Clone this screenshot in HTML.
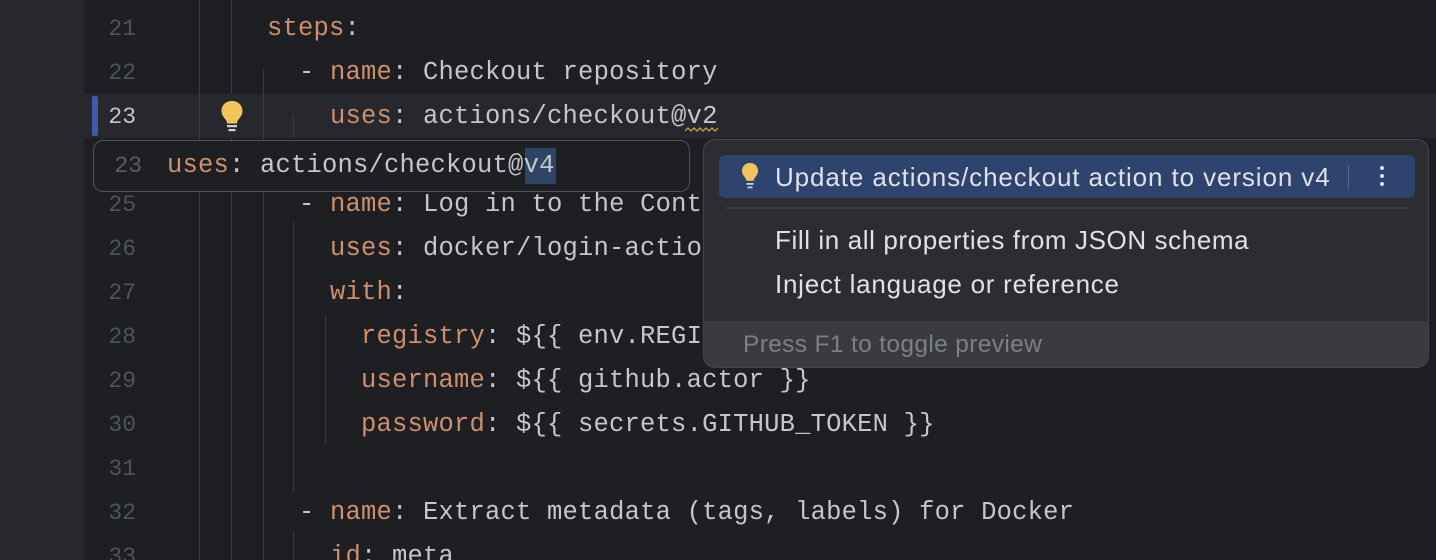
<!DOCTYPE html>
<html><head><meta charset="utf-8"><style>
*{margin:0;padding:0;box-sizing:border-box}
html,body{width:1436px;height:560px;overflow:hidden}
body{background:#1e1f22;position:relative;font-family:"Liberation Mono",monospace}
.left{position:absolute;left:0;top:0;width:84px;height:560px;background:#26282c}
.cur{position:absolute;left:84px;top:94px;width:1352px;height:44px;background:#26282e}
.mark{position:absolute;left:92px;top:96px;width:6px;height:40px;background:#3d5ba8;border-radius:2px}
.ln{position:absolute;left:100px;width:36px;text-align:right;color:#4e535c;font-size:23px;line-height:44px;height:44px}
.code{position:absolute;font-size:25.5px;line-height:44px;height:44px;color:#c4c6cc;white-space:pre;letter-spacing:0.2px}
.k{color:#cf8e6d}
.g{position:absolute;width:1px;background:#393b40}
.p1{position:absolute;left:93px;top:140px;width:597px;height:52px;background:#1e1f22;border:1px solid #4e5157;border-radius:10px}
.p2{position:absolute;left:703px;top:139px;width:726px;height:229px;background:#2b2d30;border:1px solid #43454a;border-radius:12px;overflow:hidden;font-family:"Liberation Sans",sans-serif}
.sel{position:absolute;left:15px;top:15px;width:696px;height:43px;background:#2e436e;border-radius:6px}
.it{position:absolute;left:71px;font-size:26px;letter-spacing:0.9px;color:#dfe1e5;line-height:30px;white-space:nowrap}
.foot{position:absolute;left:0;top:181px;width:726px;height:48px;background:#393b40}
</style></head><body>
<div class="left"></div>
<div class="cur"></div>
<div class="mark"></div>

<div class="g" style="left:199px;top:0;height:560px"></div>
<div class="g" style="left:231px;top:0;height:94px"></div><div class="g" style="left:231px;top:138px;height:422px"></div>
<div class="g" style="left:263px;top:70px;height:490px"></div>
<div class="g" style="left:293px;top:114px;height:24px"></div>
<div class="g" style="left:293px;top:222px;height:270px"></div>
<div class="g" style="left:293px;top:530px;height:30px"></div>
<div class="g" style="left:325px;top:314px;height:130px"></div>

<div class="ln" style="top:7px">21</div>
<div class="ln" style="top:51px">22</div>
<div class="ln" style="top:95px;color:#c4c6cc">23</div>
<div class="ln" style="top:183px">25</div>
<div class="ln" style="top:227px">26</div>
<div class="ln" style="top:271px">27</div>
<div class="ln" style="top:315px">28</div>
<div class="ln" style="top:359px">29</div>
<div class="ln" style="top:403px">30</div>
<div class="ln" style="top:447px">31</div>
<div class="ln" style="top:491px">32</div>
<div class="ln" style="top:535px">33</div>

<svg style="position:absolute;left:219px;top:100px" width="26" height="34" viewBox="0 0 26 34"><path d="M13 1C6.5 1 2.5 5.5 2.5 11c0 4 2.5 6.5 4 8.5 1 1.3 1.5 2.5 1.5 4h10c0-1.5.5-2.7 1.5-4 1.5-2 4-4.5 4-8.5C23.5 5.5 19.5 1 13 1z" fill="#f2c55c"/><rect x="8" y="25" width="10" height="2.2" fill="#cfd1d8"/><rect x="9.5" y="29" width="7" height="2.2" fill="#cfd1d8"/></svg>

<div class="code" style="left:267px;top:7px"><span class="k">steps</span>:</div>
<div class="code" style="left:299px;top:51px">- <span class="k">name</span>: Checkout repository</div>
<div class="code" style="left:330px;top:95px"><span class="k">uses</span>: actions/checkout@v2</div>
<svg style="position:absolute;left:685px;top:127px" width="34" height="6"><path d="M0 4 L3 1 L6 4 L9 1 L12 4 L15 1 L18 4 L21 1 L24 4 L27 1 L30 4 L33 1" stroke="#c9a541" fill="none" stroke-width="1.3"/></svg>
<div class="code" style="left:299px;top:183px">- <span class="k">name</span>: Log in to the Cont</div>
<div class="code" style="left:330px;top:227px"><span class="k">uses</span>: docker/login-actio</div>
<div class="code" style="left:330px;top:271px"><span class="k">with</span>:</div>
<div class="code" style="left:361px;top:315px"><span class="k">registry</span>: ${{ env.REGI</div>
<div class="code" style="left:361px;top:359px"><span class="k">username</span>: ${{ github.actor }}</div>
<div class="code" style="left:361px;top:403px"><span class="k">password</span>: ${{ secrets.GITHUB_TOKEN }}</div>
<div class="code" style="left:299px;top:491px">- <span class="k">name</span>: Extract metadata (tags, labels) for Docker</div>
<div class="code" style="left:330px;top:535px"><span class="k">id</span>: meta</div>

<div class="p1">
  <div class="ln" style="left:8px;top:3px;width:40px;color:#5a5d63">23</div>
  <div style="position:absolute;left:431px;top:7px;width:31px;height:36px;background:#2d4566"></div>
  <div class="code" style="left:73px;top:3px"><span class="k">uses</span>: actions/checkout@v4</div>
</div>

<div class="p2">
  <div class="sel"></div>
  <svg style="position:absolute;left:36px;top:22px" width="20" height="30" viewBox="0 0 20 30"><path d="M10 1C5 1 2 4.5 2 9c0 3 2 5 3 6.5.8 1 1.2 2 1.2 3.3h7.6c0-1.3.4-2.3 1.2-3.3 1-1.5 3-3.5 3-6.5C18 4.5 15 1 10 1z" fill="#f2c55c"/><rect x="6.5" y="21" width="7" height="1.8" fill="#cfd1d8"/><rect x="7.5" y="24.5" width="5" height="1.8" fill="#cfd1d8"/></svg>
  <div class="it" style="top:22px">Update actions/checkout action to version v4</div>
  <div style="position:absolute;left:644px;top:25px;width:1px;height:24px;background:#5a6b8c"></div>
  <div style="position:absolute;left:676px;top:26px;width:4px;height:4px;border-radius:2px;background:#dfe1e5;box-shadow:0 8px 0 #dfe1e5,0 16px 0 #dfe1e5"></div>
  <div style="position:absolute;left:22px;top:67px;width:682px;height:2px;background:#393b40"></div>
  <div class="it" style="top:85px;letter-spacing:0.6px">Fill in all properties from JSON schema</div>
  <div class="it" style="top:129px;letter-spacing:0.75px">Inject language or reference</div>
  <div class="foot"><div class="it" style="left:39px;top:9px;color:#7c7f86;font-size:24.5px;letter-spacing:0.35px">Press F1 to toggle preview</div></div>
</div>
</body></html>
